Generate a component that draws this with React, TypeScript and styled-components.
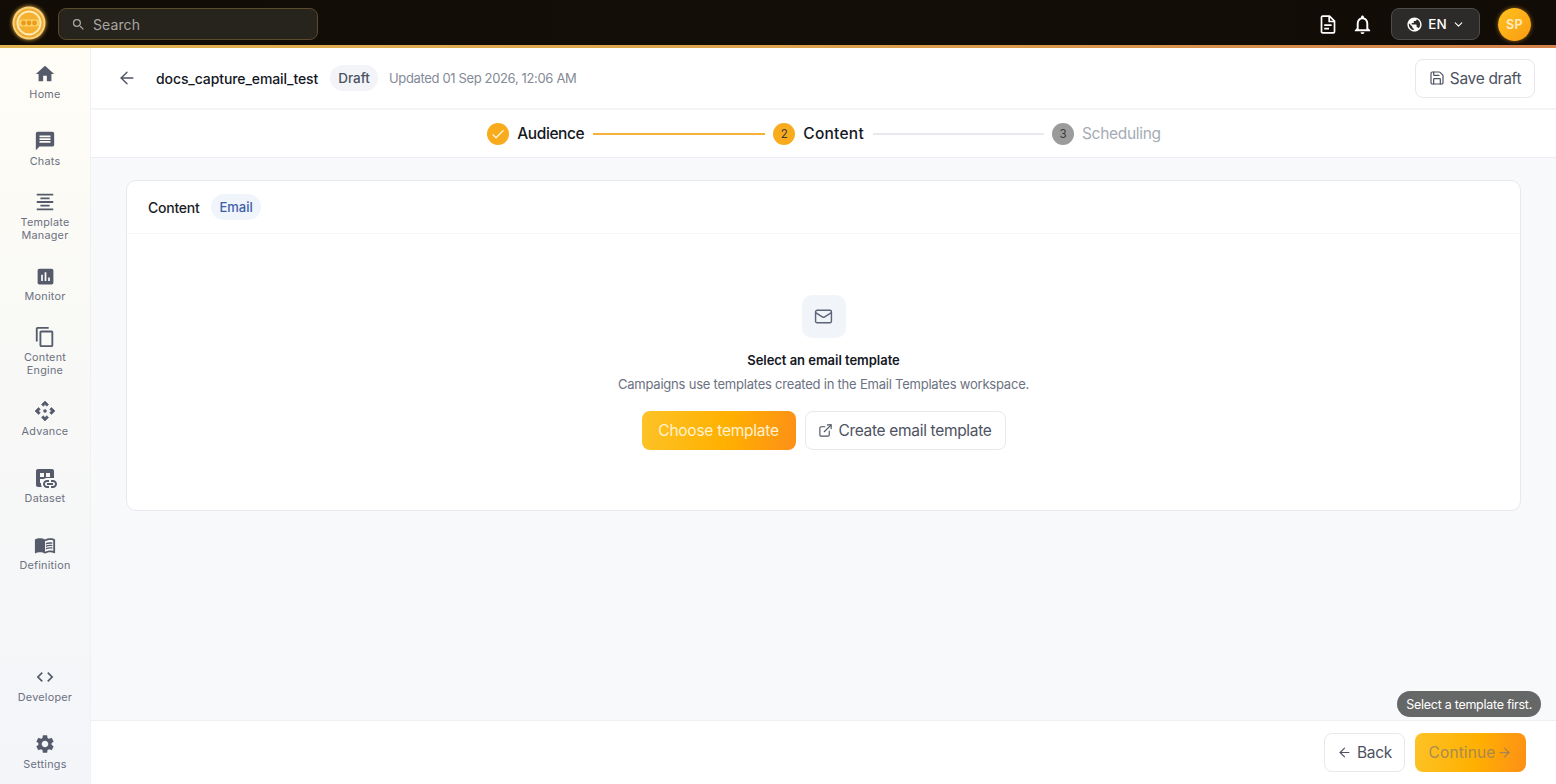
import React from "react";
import styled, { createGlobalStyle } from "styled-components";
import {
  MdHome, MdMessage, MdFormatAlignCenter, MdAssessment, MdContentCopy,
  MdDatasetLinked, MdMenuBook, MdCode, MdSettings, MdSearch, MdNotificationsNone,
  MdPublic, MdCheck,
} from "react-icons/md";
import { ArrowLeft, ArrowRight, ChevronDown, ExternalLink, Mail, Save } from "lucide-react";

const Global = createGlobalStyle`
  html, body { margin: 0; padding: 0; height: 100%; overflow: hidden; }
  body { font-family: Inter, "Liberation Sans", sans-serif; background: #fff; }
  * { box-sizing: border-box; }
`;

const Page = styled.div`display: flex; flex-direction: column; width: 100%; height: 100vh; overflow: hidden;`;

const TopBar = styled.header`
  height: 48px; flex: none; display: flex; align-items: center; padding: 0 25px 0 12px;
  background: linear-gradient(90deg, #120c06, #130e08 50%, #120c07);
  position: relative;
  &::after { content: ""; position: absolute; left: 0; right: 0; bottom: 0; height: 3px;
    background: linear-gradient(90deg, #e0b450, #dca24c 50%, #d2814a); }
`;
const Logo = styled.svg`width: 34px; height: 34px; flex: none; margin-top: -2px; filter: drop-shadow(0 0 2px #f5b53c);`;
const SearchBox = styled.div`
  width: 260px; height: 32px; margin-left: 12px; display: flex; align-items: center; gap: 7px; padding-left: 12px;
  border: 1px solid #5a4b2c; border-radius: 8px; background: #27231d; color: #a9a7a3; font-size: 14px; letter-spacing: .1px;
`;
const Spacer = styled.div`flex: 1;`;
const TopIcon = styled.span<{ $gap: number }>`display: flex; color: #fff; margin-right: ${p => p.$gap}px;`;
const Lang = styled.div`
  width: 89px; height: 32px; display: flex; align-items: center; justify-content: center; gap: 5px;
  border: 1px solid #4d4d4b; border-radius: 8px; background: #2c2b29; color: #fff; font-size: 13.5px; font-weight: 500;
`;
const Avatar = styled.div`
  width: 33px; height: 33px; margin-left: 18px; border-radius: 50%; display: flex; align-items: center; justify-content: center;
  background: linear-gradient(135deg, #ffc21e, #fb9a12); color: #fde9b8; font-size: 12.5px; font-weight: 700; letter-spacing: .4px;
  box-shadow: 0 0 4px rgba(245, 166, 35, .6);
`;

const Body = styled.div`flex: 1; display: flex; min-height: 0;`;
const Sidebar = styled.nav`
  width: 91px; flex: none; overflow: hidden; border-right: 1px solid #f0f1f3;
  background: linear-gradient(180deg, #fffdf6, #f9f9f6 35%, #f3f5f9);
`;
const NavGap = styled.div`height: 65px;`;
const NavItem = styled.div<{ $tall: boolean }>`
  height: ${p => (p.$tall ? 68 : 67)}px; display: flex; flex-direction: column; align-items: center; justify-content: center;
`;
const NavIcon = styled.span`
  width: 24px; height: 24px; display: flex; align-items: center; justify-content: center; color: #555b6b; margin-bottom: 1px;
`;
const NavLabel = styled.span`color: #6b7080; font-size: 10.8px; line-height: 13px; letter-spacing: .25px; text-align: center; margin-top: 1px;`;

const Main = styled.main`flex: 1; min-width: 0; display: flex; flex-direction: column; background: #f8f9fb; position: relative;`;
const Header = styled.div`
  height: 62px; flex: none; display: flex; align-items: center; padding: 0 21px 0 26px; background: #fff; border-bottom: 2px solid #f3f4f6;
`;
const Title = styled.div`margin-left: 19px; font-size: 14px; font-weight: 500; color: #14171f; letter-spacing: -.1px;`;
const Pill = styled.span<{ $blue?: boolean }>`
  height: 26px; padding: 0 8px; margin-left: 12px; display: flex; align-items: center; border-radius: 13px; font-weight: 500;
  font-size: ${p => (p.$blue ? 13 : 13.5)}px;
  background: ${p => (p.$blue ? "#f0f4fb" : "#f2f4f8")}; color: ${p => (p.$blue ? "#3e5fa8" : "#4b5262")};
`;
const BackLink = styled.span`display: flex; color: #4b5160; flex: none;`;
const Updated = styled.div`margin-left: 11px; font-size: 13px; color: #848a97; letter-spacing: -.35px;`;
const OutlineBtn = styled.button<{ $w: number; $h: number }>`
  width: ${p => p.$w}px; height: ${p => p.$h}px; flex: none; padding: 0; display: flex; align-items: center; justify-content: center; gap: 5px;
  border: 1px solid #e6e8ec; border-radius: 8px; background: #fff; color: #4c5260; font-family: inherit; font-size: 15.5px; letter-spacing: -.32px;
`;
const Stepper = styled.div`
  height: 48px; flex: none; display: flex; align-items: center; justify-content: center; background: #fff; border-bottom: 1px solid #eceef1; padding-left: 1px;
`;
const StepDot = styled.span<{ $grey?: boolean }>`
  width: 22px; height: 22px; border-radius: 50%; flex: none; display: flex; align-items: center; justify-content: center;
  background: ${p => (p.$grey ? "#9b9b9b" : "#f8ab1c")}; color: #3a3a3a; font-size: 11.5px;
  svg { width: 16px; height: 16px; color: #fff3d6; }
`;
const StepLabel = styled.span<{ $muted?: boolean; $ls: number }>`
  margin-left: 8px; font-size: 15.5px; letter-spacing: ${p => p.$ls}px; color: ${p => (p.$muted ? "#a6abb5" : "#15181f")};
  font-weight: ${p => (p.$muted ? 400 : 500)};
`;
const StepLine = styled.span<{ $on?: boolean }>`
  width: ${p => (p.$on ? 172 : 171)}px; height: 2px; margin: 0 8px 0 9px; background: ${p => (p.$on ? "#f7b23b" : "#e8e9ec")};
`;
const Content = styled.div`flex: 1; padding: 22px 35px 0 35px; min-height: 0;`;
const Card = styled.section`height: 331px; border: 1px solid #e7e9ed; border-radius: 10px; background: #fff; display: flex; flex-direction: column;`;
const CardHead = styled.div`height: 53px; flex: none; display: flex; align-items: center; padding-left: 21px; border-bottom: 1px solid #f5f6f8;`;
const CardTitle = styled.span`font-size: 14px; font-weight: 500; color: #1a1d25; letter-spacing: -.25px;`;
const CardBody = styled.div`flex: 1; display: flex; flex-direction: column; align-items: center; padding-top: 61px;`;
const MailTile = styled.div`
  width: 44px; height: 43px; border-radius: 10px; background: #f1f4f9; color: #5b6478; display: flex; align-items: center; justify-content: center;
`;
const EmptyTitle = styled.div`margin-top: 14px; font-size: 13px; line-height: 16px; font-weight: 600; color: #14171f; letter-spacing: -.03px;`;
const EmptySub = styled.div`margin-top: 8px; font-size: 13px; line-height: 16px; color: #6c7281; letter-spacing: -.22px;`;
const Actions = styled.div`margin-top: 19px; display: flex; gap: 9px;`;
const FillBtn = styled.button<{ $w: number; $h: number; $off?: boolean }>`
  width: ${p => p.$w}px; height: ${p => p.$h}px; flex: none; padding: 0; border: 0; border-radius: 8px; display: flex; align-items: center; justify-content: center; gap: 2px;
  background: linear-gradient(100deg, #fdc327, #ffb000 55%, #fd8f17); font-family: inherit; font-size: 15.5px;
  letter-spacing: ${p => (p.$off ? .1 : -.25)}px;
  color: ${p => (p.$off ? "rgba(145,125,100,.8)" : "#fff2cf")};
`;
const Footer = styled.div`
  height: 64px; flex: none; display: flex; align-items: center; justify-content: flex-end; gap: 10px; padding: 0 30px 0 0; background: #fff; border-top: 1px solid #eeeff2;
`;
const Tip = styled.div`
  position: absolute; right: 15px; bottom: 67px; height: 26px; padding: 0 9px; display: flex; align-items: center; border-radius: 13px;
  background: #666767; color: #fff; font-size: 12.5px; letter-spacing: -.27px;
`;

const AdvanceIcon = () => (
  <svg width="24" height="24" viewBox="0 0 24 24" fill="currentColor" stroke="currentColor" strokeWidth=".6" strokeLinejoin="round">
    <path d="M15.54 5.54L13.77 7.3 12 5.54 10.23 7.3 8.46 5.54 12 2zm2.92 10l-1.76-1.77L18.46 12l-1.76-1.77 1.76-1.77L22 12zm-10 2.92l1.77-1.76L12 18.46l1.77-1.76 1.77 1.76L12 22zm-2.92-10l1.76 1.77L5.54 12l1.76 1.77-1.76 1.77L2 12z" />
    <circle cx="12" cy="12" r="1.8" stroke="none" />
  </svg>
);

const DocIcon = () => (
  <svg width="16" height="19" viewBox="0 0 16 19" fill="none" stroke="currentColor" strokeWidth="1.7" strokeLinejoin="round">
    <path d="M1.5 2.2a1 1 0 0 1 1-1H9.5L14.5 6.2V16.8a1 1 0 0 1-1 1H2.5a1 1 0 0 1-1-1z" />
    <path d="M9.2 1.4V6.5H14.4" />
    <path d="M4.2 10.2H11.6M4.2 13.6H9" />
  </svg>
);

const nav = [
  [<MdHome size={22} />, ["Home"]],
  [<MdMessage size={22} />, ["Chats"]],
  [<MdFormatAlignCenter size={22} />, ["Template", "Manager"]],
  [<MdAssessment size={21} />, ["Monitor"]],
  [<MdContentCopy size={22} />, ["Content", "Engine"]],
  [<AdvanceIcon />, ["Advance"]],
  [<MdDatasetLinked size={24} />, ["Dataset"]],
  [<MdMenuBook size={22} />, ["Definition"]],
] as const;
const nav2 = [
  [<MdCode size={20} />, ["Developer"]],
  [<MdSettings size={22} />, ["Settings"]],
] as const;

function Item({ icon, l }: { icon: React.ReactNode; l: readonly string[] }) {
  return (
    <NavItem $tall={l.length > 1}>
      <NavIcon>{icon}</NavIcon>
      <NavLabel>{l.map(t => <div key={t}>{t}</div>)}</NavLabel>
    </NavItem>
  );
}

export default function App() {
  return (
    <Page>
      <Global />
      <TopBar>
        <Logo viewBox="0 0 34 34">
          <circle cx="17" cy="17" r="16.5" fill="#fbd27c" />
          <circle cx="17" cy="17" r="14.5" fill="#eda92c" />
          <circle cx="17" cy="17" r="12.5" fill="#fdeab8" />
          <circle cx="17" cy="17" r="10.5" fill="#f4b02e" />
          <rect x="6.5" y="13.5" width="21" height="7" rx="3.5" fill="#fbd467" />
          <circle cx="11.5" cy="17" r="2.4" fill="#ec9a1e" />
          <circle cx="17" cy="17" r="2.4" fill="#ec9a1e" />
          <circle cx="22.5" cy="17" r="2.4" fill="#ec9a1e" />
        </Logo>
        <SearchBox><MdSearch size={15} />Search</SearchBox>
        <Spacer />
        <TopIcon $gap={15}><DocIcon /></TopIcon>
        <TopIcon $gap={17}><MdNotificationsNone size={23} /></TopIcon>
        <Lang><MdPublic size={17} />EN<ChevronDown size={13} /></Lang>
        <Avatar>SP</Avatar>
      </TopBar>
      <Body>
        <Sidebar>
          {nav.map(([icon, l]) => <Item key={l[0]} icon={icon} l={l} />)}
          <NavGap />
          {nav2.map(([icon, l]) => <Item key={l[0]} icon={icon} l={l} />)}
        </Sidebar>
        <Main>
          <Header>
            <BackLink><ArrowLeft size={20} strokeWidth={1.6} /></BackLink>
            <Title>docs_capture_email_test</Title>
            <Pill>Draft</Pill>
            <Updated>Updated 01 Sep 2026, 12:06 AM</Updated>
            <Spacer />
            <OutlineBtn $w={120} $h={39}><Save size={16} strokeWidth={1.8} />Save draft</OutlineBtn>
          </Header>
          <Stepper>
            <StepDot><MdCheck /></StepDot>
            <StepLabel $ls={-0.4}>Audience</StepLabel>
            <StepLine $on />
            <StepDot>2</StepDot>
            <StepLabel $ls={0.25}>Content</StepLabel>
            <StepLine />
            <StepDot $grey>3</StepDot>
            <StepLabel $muted $ls={-0.3}>Scheduling</StepLabel>
          </Stepper>
          <Content>
            <Card>
              <CardHead>
                <CardTitle>Content</CardTitle>
                <Pill $blue>Email</Pill>
              </CardHead>
              <CardBody>
                <MailTile><Mail size={19} strokeWidth={1.8} /></MailTile>
                <EmptyTitle>Select an email template</EmptyTitle>
                <EmptySub>Campaigns use templates created in the Email Templates workspace.</EmptySub>
                <Actions>
                  <FillBtn $w={154} $h={39}>Choose template</FillBtn>
                  <OutlineBtn $w={201} $h={39}><ExternalLink size={15} strokeWidth={1.8} />Create email template</OutlineBtn>
                </Actions>
              </CardBody>
            </Card>
          </Content>
          <Footer>
            <OutlineBtn $w={81} $h={39}><ArrowLeft size={15} strokeWidth={1.8} />Back</OutlineBtn>
            <FillBtn $w={111} $h={39} $off>Continue<ArrowRight size={15} /></FillBtn>
          </Footer>
          <Tip>Select a template first.</Tip>
        </Main>
      </Body>
    </Page>
  );
}
